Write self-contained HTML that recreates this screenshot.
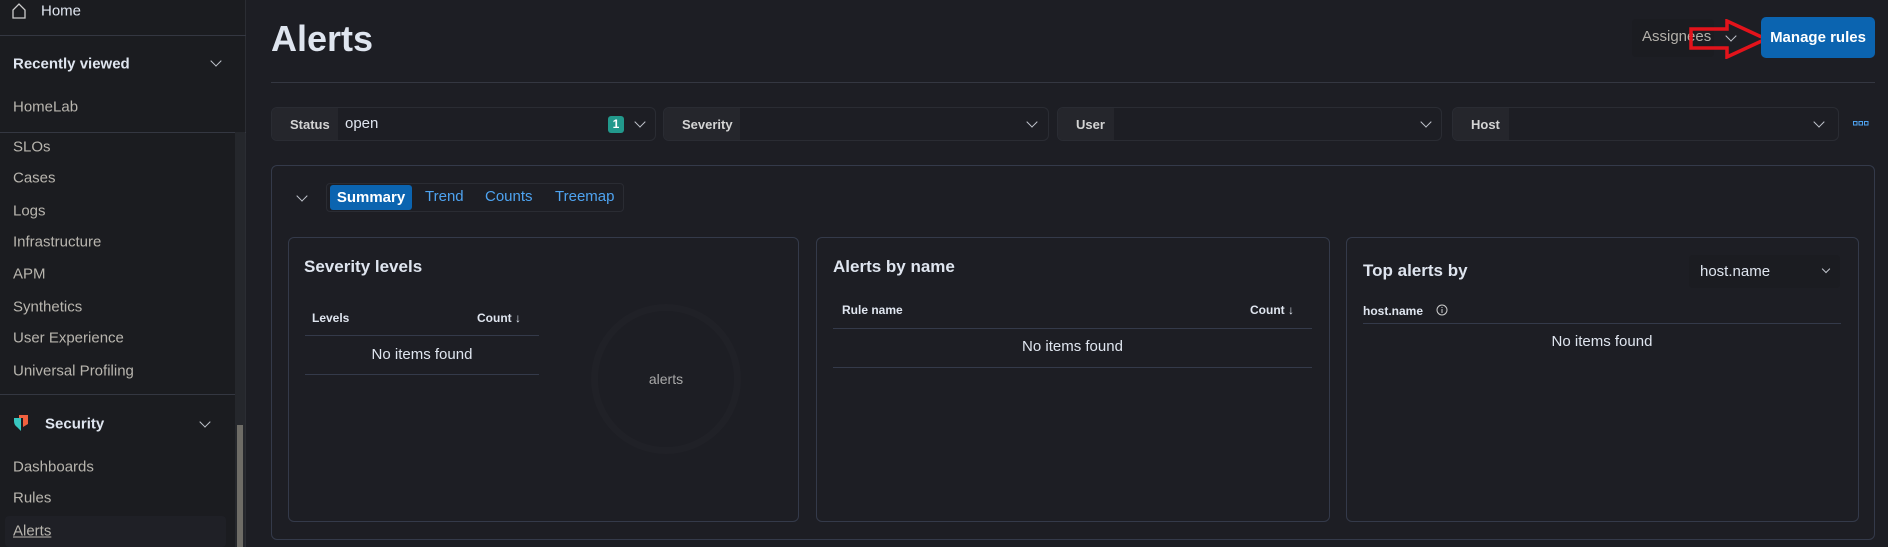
<!DOCTYPE html>
<html><head><meta charset="utf-8"><style>
*{box-sizing:border-box;margin:0;padding:0}
body{width:1888px;height:547px;overflow:hidden;background:#1d1e24;font-family:"Liberation Sans",sans-serif;color:#dfe5ef;position:relative}
.a{position:absolute}
.side{left:0;top:0;width:246px;height:547px;background:#1b1c20;border-right:1px solid #2b2d33}
.si{position:absolute;left:13px;font-size:15px;color:#b8b5ae;transform:translateY(-50%)}
.hl{position:absolute;left:0;width:235px;height:1px;background:#343741}
.sb{left:235px;top:132px;width:10px;height:415px;background:#25272c}
.th{left:237px;top:425px;width:6px;height:122px;background:#6e6c66}
.chev{position:absolute;width:8px;height:8px;border-right:1.5px solid #c0c4cc;border-bottom:1.5px solid #c0c4cc;transform:rotate(45deg)}
.filt{position:absolute;top:107px;height:34px;border:1px solid #2a2c33;border-radius:6px;background:#1d1e24;overflow:hidden}
.filt .lab{position:absolute;left:0;top:0;bottom:0;background:#25262c;font-size:13px;font-weight:bold;color:#d4d4d4;display:flex;align-items:center;padding-left:18px}
.panel{position:absolute;top:237px;height:285px;border:1px solid #343a4a;border-radius:6px}
.pt{position:absolute;font-size:17px;font-weight:bold;color:#dfe5ef}
.tb{position:absolute;font-size:12px;font-weight:bold;color:#dfe5ef}
.line{position:absolute;height:1px;background:#343a4a}
.nf{position:absolute;font-size:15px;color:#dfe5ef;text-align:center}
</style></head><body>
<div class="a side">
 <svg class="a" style="left:12px;top:3px" width="14" height="16" viewBox="0 0 14 16"><path d="M1 15V7L7 1L13 7V15Z" fill="none" stroke="#ccc" stroke-width="1.3"/></svg>
 <div class="si" style="top:11px;left:41px;color:#dfe5ef">Home</div>
 <div class="hl" style="top:35px;width:246px"></div>
 <div class="si" style="top:64px;font-weight:bold;color:#dfe5ef">Recently viewed</div>
 <div class="chev" style="left:212px;top:57px"></div>
 <div class="si" style="top:107px">HomeLab</div>
 <div class="hl" style="top:132px;width:246px"></div>
 <div class="si" style="top:147px">SLOs</div>
 <div class="si" style="top:178px">Cases</div>
 <div class="si" style="top:211px">Logs</div>
 <div class="si" style="top:242px">Infrastructure</div>
 <div class="si" style="top:274px">APM</div>
 <div class="si" style="top:307px">Synthetics</div>
 <div class="si" style="top:338px">User Experience</div>
 <div class="si" style="top:371px">Universal Profiling</div>
 <div class="hl" style="top:394px"></div>
 <svg class="a" style="left:14px;top:415px" width="14" height="17" viewBox="0 0 14 17"><path d="M5 0H14V9L9 12V3H5Z" fill="#f0613f"/><path d="M0 3H7V16L3 12Q0 10 0 6Z" fill="#39c7c0"/></svg>
 <div class="si" style="top:424px;left:45px;font-weight:bold;color:#dfe5ef">Security</div>
 <div class="chev" style="left:201px;top:418px"></div>
 <div class="si" style="top:467px">Dashboards</div>
 <div class="si" style="top:498px">Rules</div>
 <div class="a" style="left:5px;top:516px;width:221px;height:31px;background:#1f2026;border-radius:4px"></div>
 <div class="si" style="top:531px;text-decoration:underline">Alerts</div>
 <div class="a sb"></div><div class="a th"></div>
</div>
<div class="a" style="left:271px;top:18px;font-size:36px;font-weight:bold;color:#dfe5ef">Alerts</div>
<div class="a" style="left:1632px;top:19px;width:82px;height:38px;background:#1b1c21;border-radius:4px"></div>
<div class="a" style="left:1642px;top:28px;font-size:15px;color:#b3b0aa">Assignees</div>
<div class="chev" style="left:1727px;top:32px"></div>
<svg class="a" style="left:1689px;top:19px" width="82" height="40" viewBox="0 0 82 40"><path d="M2 10H38V2L77 20L38 38V29H2Z" fill="none" stroke="#e3131b" stroke-width="3.5"/></svg>
<div class="a" style="left:1761px;top:17px;width:114px;height:41px;background:#0b64b0;border-radius:5px;color:#fff;font-size:15px;font-weight:bold;display:flex;align-items:center;justify-content:center">Manage rules</div>
<div class="a" style="left:271px;top:82px;width:1604px;height:1px;background:#343741"></div>
<div class="filt" style="left:271px;width:385px"><div class="lab" style="width:66px">Status</div><div class="a" style="left:73px;top:7px;font-size:15px">open</div><div class="a" style="left:336px;top:8px;width:16px;height:17px;background:#22998c;border-radius:3px;font-size:12px;font-weight:bold;color:#fff;text-align:center;line-height:17px">1</div><div class="chev" style="left:364px;top:10px"></div></div>
<div class="filt" style="left:663px;width:386px"><div class="lab" style="width:76px">Severity</div><div class="chev" style="left:364px;top:10px"></div></div>
<div class="filt" style="left:1057px;width:385px"><div class="lab" style="width:56px">User</div><div class="chev" style="left:364px;top:10px"></div></div>
<div class="filt" style="left:1452px;width:387px"><div class="lab" style="width:56px">Host</div><div class="chev" style="left:362px;top:10px"></div></div>
<svg class="a" style="left:1853px;top:121px" width="16" height="5"><rect x="0.5" y="0.5" width="3.5" height="3.5" fill="none" stroke="#4ea3f0"/><rect x="6" y="0.5" width="3.5" height="3.5" fill="none" stroke="#4ea3f0"/><rect x="11.5" y="0.5" width="3.5" height="3.5" fill="none" stroke="#4ea3f0"/></svg>
<div class="a" style="left:271px;top:165px;width:1604px;height:375px;border:1px solid #343a4a;border-radius:6px"></div>
<div class="chev" style="left:298px;top:192px"></div>
<div class="a" style="left:326px;top:183px;width:298px;height:29px;border:1px solid #2a2c33;border-radius:4px"></div>
<div class="a" style="left:330px;top:185px;width:82px;height:25px;background:#0b64b0;border-radius:3px;color:#fff;font-size:15px;font-weight:bold;text-align:center;line-height:25px">Summary</div>
<div class="a" style="left:425px;top:188px;font-size:15px;color:#4ea3f0">Trend</div>
<div class="a" style="left:485px;top:188px;font-size:15px;color:#4ea3f0">Counts</div>
<div class="a" style="left:555px;top:188px;font-size:15px;color:#4ea3f0">Treemap</div>
<div class="panel" style="left:288px;width:511px"></div>
<div class="pt" style="left:304px;top:257px">Severity levels</div>
<div class="tb" style="left:312px;top:311px">Levels</div>
<div class="tb" style="left:477px;top:311px">Count ↓</div>
<div class="line" style="left:305px;top:335px;width:234px"></div>
<div class="nf" style="left:305px;top:346px;width:234px">No items found</div>
<div class="line" style="left:305px;top:374px;width:234px"></div>
<div class="a" style="left:591px;top:304px;width:150px;height:150px;border:7px solid #202127;border-radius:50%"></div>
<div class="a" style="left:591px;top:371px;width:150px;text-align:center;font-size:14px;color:#a9a9a9">alerts</div>
<div class="panel" style="left:816px;width:514px"></div>
<div class="pt" style="left:833px;top:257px">Alerts by name</div>
<div class="tb" style="left:842px;top:303px">Rule name</div>
<div class="tb" style="left:1250px;top:303px">Count ↓</div>
<div class="line" style="left:833px;top:328px;width:479px"></div>
<div class="nf" style="left:833px;top:338px;width:479px">No items found</div>
<div class="line" style="left:833px;top:367px;width:479px"></div>
<div class="panel" style="left:1346px;width:513px"></div>
<div class="pt" style="left:1363px;top:261px">Top alerts by</div>
<div class="a" style="left:1689px;top:255px;width:151px;height:33px;background:#1b1c21;border-radius:4px"></div>
<div class="a" style="left:1700px;top:263px;font-size:15px;color:#dfe5ef">host.name</div>
<div class="chev" style="left:1823px;top:266px;width:6px;height:6px"></div>
<div class="tb" style="left:1363px;top:304px">host.name</div>
<svg class="a" style="left:1436px;top:304px" width="12" height="12"><circle cx="6" cy="6" r="5" fill="none" stroke="#ccc"/><path d="M6 5V9M6 3V4" stroke="#ccc"/></svg>
<div class="line" style="left:1363px;top:323px;width:478px"></div>
<div class="nf" style="left:1363px;top:333px;width:478px">No items found</div>
</body></html>
